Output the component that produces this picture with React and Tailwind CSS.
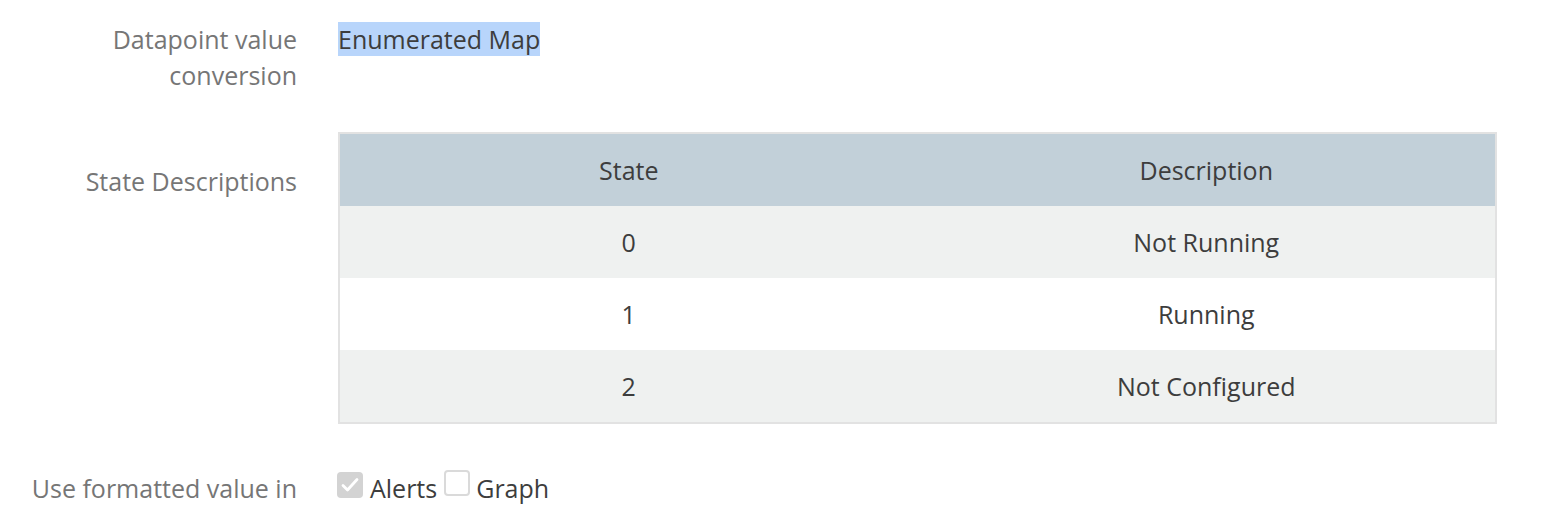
import React from "react"

const rows = [
    { state: "0", desc: "Not Running" },
    { state: "1", desc: "Running" },
    { state: "2", desc: "Not Configured" },
]

const CheckBox = ({ checked }) => {
    if (checked) {
        return (
            <span className="inline-flex h-[26px] w-[26px] items-center justify-center rounded-[4px] bg-[#d3d3d3]">
                <svg width="22" height="22" viewBox="0 0 22 22" fill="none">
                    <path d="M4 11.5l4.5 4.5 9.5-10.5" stroke="#ffffff" strokeWidth="2.8" strokeLinecap="round" strokeLinejoin="round" />
                </svg>
            </span>
        )
    }
    return <span className="inline-block h-[26px] w-[26px] rounded-[4px] border-2 border-[#dadada] bg-white"></span>
}

const App = () => {
    return (
        <div className="min-h-[528px] bg-white pt-[21px] text-[25px] leading-[36px]" style={{ fontFamily: "'Open Sans', 'Noto Sans', sans-serif" }}>
            <div className="flex">
                <div className="w-[297px] shrink-0 text-right text-[#767676]">
                    Datapoint value<br />conversion
                </div>
                <div className="ml-[41px] text-[#3d3d3d]">
                    <span className="bg-[#b8d5fb]">Enumerated Map</span>
                </div>
            </div>

            <div className="mt-[39px] flex">
                <div className="w-[297px] shrink-0 pt-[31px] text-right text-[#767676]">State Descriptions</div>
                <div className="ml-[41px] w-[1159px] border-2 border-[#e2e2e2]">
                    <div className="grid h-[72px] grid-cols-2 items-center bg-[#c2d0d9] text-center text-[#3d3d3d]">
                        <div>State</div>
                        <div>Description</div>
                    </div>
                    {rows.map((r, i) => (
                        <div key={r.state} className={"grid h-[72px] grid-cols-2 items-center text-center text-[#3d3d3d] " + (i % 2 === 0 ? "bg-[#eff1f0]" : "bg-white")}>
                            <div>{r.state}</div>
                            <div>{r.desc}</div>
                        </div>
                    ))}
                </div>
            </div>

            <div className="mt-[46px] flex items-center">
                <div className="w-[297px] shrink-0 text-right text-[#767676]">Use formatted value in</div>
                <div className="ml-[40px] flex items-center text-[#3d3d3d]">
                    <span className="-mt-[4px]"><CheckBox checked /></span>
                    <span className="ml-[7px]">Alerts</span>
                    <span className="-mt-[4px] ml-[7px]"><CheckBox /></span>
                    <span className="ml-[6px]">Graph</span>
                </div>
            </div>
        </div>
    )
}

export default App
